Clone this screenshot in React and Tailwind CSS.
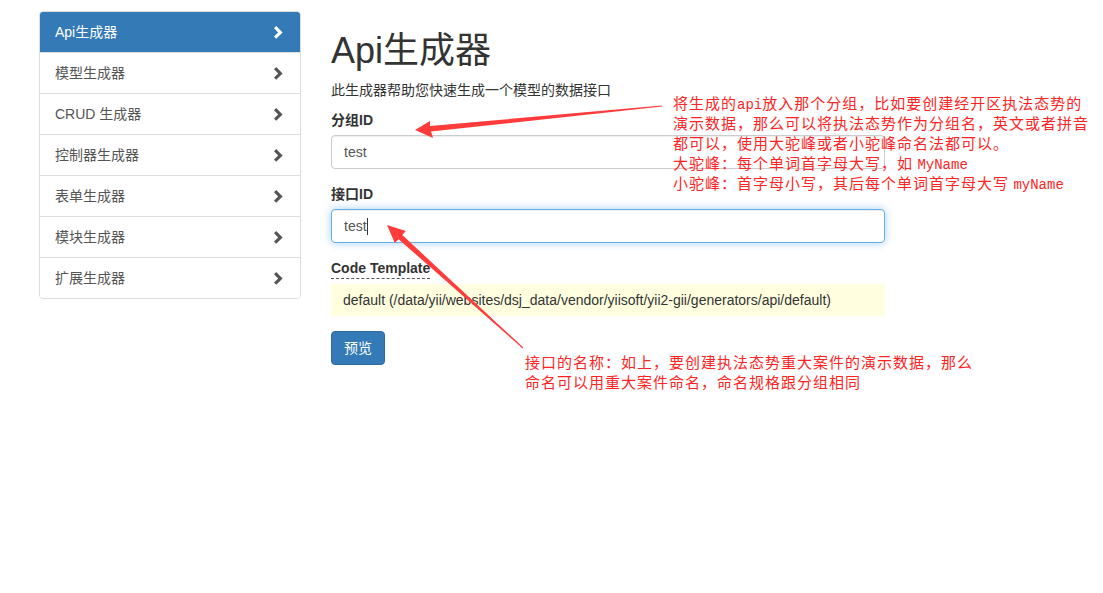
import React from 'react';

const generators = [
  { label: 'Api生成器', active: true },
  { label: '模型生成器' },
  { label: 'CRUD 生成器' },
  { label: '控制器生成器' },
  { label: '表单生成器' },
  { label: '模块生成器' },
  { label: '扩展生成器' },
];

function Chevron({ className }) {
  return (
    <svg viewBox="0 0 9 13" className={className} fill="currentColor">
      <polygon points="0,2.3 2.2,0.1 8.6,6.4 2.2,12.7 0,10.5 4.2,6.4" />
    </svg>
  );
}

function Sidebar() {
  return (
    <div className="w-[262px] shrink-0 self-start border border-[#ddd] rounded-[4px] overflow-hidden">
      {generators.map((g, i) => (
        <div
          key={g.label}
          className={`pl-[15px] pr-[17px] flex items-center justify-between text-[14px] leading-[20px] ${
            i > 0 ? 'h-[41px] border-t border-[#ddd]' : 'h-[40px]'
          } ${g.active ? 'bg-[#337ab7] text-white' : 'bg-white text-[#555]'}`}
        >
          <span>{g.label}</span>
          <Chevron className={`w-[9px] h-[13px] ${g.active ? 'text-white' : 'text-[#555]'}`} />
        </div>
      ))}
    </div>
  );
}

function Field({ label, value, focused }) {
  return (
    <div className="mb-[15px]">
      <div className="font-bold text-[14px] leading-[20px] mb-[5px] text-[#333]">{label}</div>
      <div
        className={`h-[34px] rounded-[4px] border px-[12px] flex items-center text-[14px] text-[#555] ${
          focused
            ? 'border-[#66afe9] shadow-[inset_0_1px_1px_rgba(0,0,0,0.075),0_0_8px_rgba(102,175,233,0.6)]'
            : 'border-[#ccc] shadow-[inset_0_1px_1px_rgba(0,0,0,0.075)]'
        }`}
      >
        <span>{value}</span>
        {focused && <span className="w-px h-[17px] bg-[#333]" />}
      </div>
    </div>
  );
}

function Arrows() {
  return (
    <svg className="absolute inset-0 pointer-events-none" width="1103" height="593" viewBox="0 0 1103 593">
      <polygon
        fill="#ff3b3b"
        points="415,130 430,121 430,126 662,105.4 662,106.6 431,131.5 433,138"
      />
      <polygon
        fill="#ff3b3b"
        points="387,225 405.8,231 402.3,235 523.3,347.6 522.7,348.4 398.6,239.2 394.8,243"
      />
    </svg>
  );
}

function Note({ className, lines }) {
  return (
    <div
      className={`absolute text-[15px] text-[#ff2424] whitespace-nowrap font-['Noto_Sans_CJK_SC','Liberation_Sans',sans-serif] ${className}`}
    >
      {lines.map((line, i) => (
        <div key={i} className="h-[20px] leading-[20px]">
          {line}
        </div>
      ))}
    </div>
  );
}

const Mono = ({ children }) => (
  <span className="font-['Liberation_Mono',monospace] text-[14px] leading-none tracking-normal">{children}</span>
);

export default function App() {
  return (
    <div className="relative w-full h-[593px] bg-white overflow-hidden font-['Liberation_Sans','Noto_Sans_CJK_SC',sans-serif] text-[#333]">
      <div className="flex pl-[39px] pt-[11px] gap-[30px]">
        <Sidebar />
        <div className="w-[554px]">
          <h1 className="mt-[20px] mb-[9px] text-[36px] leading-[40px] text-[#333]">Api生成器</h1>
          <p className="text-[14px] leading-[20px] mb-[10px]">此生成器帮助您快速生成一个模型的数据接口</p>
          <Field label="分组ID" value="test" />
          <Field label="接口ID" value="test" focused />
          <div className="mb-[15px]">
            <div className="w-fit font-bold text-[14px] leading-[20px] border-b border-dashed border-[#555] text-[#333]">
              Code Template
            </div>
            <div className="mt-[5px] bg-[#ffffe0] px-[12px] py-[6px] text-[14px] leading-[20px] text-[#333]">
              default (/data/yii/websites/dsj_data/vendor/yiisoft/yii2-gii/generators/api/default)
            </div>
          </div>
          <button className="h-[34px] px-[12px] rounded-[4px] bg-[#337ab7] border border-[#2e6da4] text-white text-[14px] leading-[20px]">
            预览
          </button>
        </div>
      </div>

      <Arrows />

      <Note
        className="left-[673px] top-[93px] tracking-[1px]"
        lines={[
          <>将生成的<Mono>api</Mono>放入那个分组，比如要创建经开区执法态势的</>,
          '演示数据，那么可以将执法态势作为分组名，英文或者拼音',
          '都可以，使用大驼峰或者小驼峰命名法都可以。',
          <>大驼峰：每个单词首字母大写，如 <Mono>MyName</Mono></>,
          <>小驼峰：首字母小写，其后每个单词首字母大写 <Mono>myName</Mono></>,
        ]}
      />

      <Note
        className="left-[525px] top-[352px] tracking-[1px]"
        lines={[
          '接口的名称：如上，要创建执法态势重大案件的演示数据，那么',
          '命名可以用重大案件命名，命名规格跟分组相同',
        ]}
      />
    </div>
  );
}
